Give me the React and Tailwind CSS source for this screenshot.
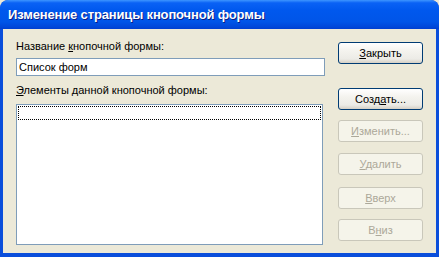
export default function App() {
  const btn =
    "w-[85px] h-[22px] rounded-[3px] border flex items-center justify-center text-[11px] leading-none";
  const enabled =
    "border-[#003C74] text-black bg-[linear-gradient(to_bottom,#FFFFFF_0%,#F4F3EE_40%,#ECEBE6_80%,#D6D0C5_100%)]";
  const disabled = "border-[#C9C7BA] text-[#ACA899] bg-[#F5F4EA]";

  return (
    <div className="w-[439px] h-[257px] font-['Liberation_Sans',Arial,sans-serif] bg-[#ECE9D8]">
      <div className="w-full h-full flex flex-col rounded-t-[8px] bg-[#0A4EDB] px-[3px] pb-[4px] overflow-hidden">
        {/* Title bar */}
        <div className="-mx-[3px] h-[29px] shrink-0 flex items-center pl-[8px] rounded-t-[8px] bg-[linear-gradient(to_bottom,#3D95FF_0%,#0A62F5_10%,#0058EE_35%,#0055E8_75%,#0048DA_92%,#003FD0_100%)]">
          <span className="text-white font-bold text-[13px] tracking-[-0.15px] [text-shadow:1px_1px_0_#0A1E86]">
            Изменение страницы кнопочной формы
          </span>
        </div>

        {/* Client area */}
        <div className="flex-1 bg-[#ECE9D8] flex pl-[13px] pr-[13px] text-[11px] text-black">
          <div className="flex flex-col w-[309px]">
            <div className="mt-[11px] h-[13px] leading-[13px]">
              Название <span className="underline">к</span>нопочной формы:
            </div>
            <div className="mt-[5px] h-[18px] w-[309px] border border-[#7F9DB9] bg-white flex items-center pl-[2px] leading-none">
              Список форм
            </div>
            <div className="mt-[8px] h-[13px] leading-[13px]">
              <span className="underline">Э</span>лементы данной кнопочной формы:
            </div>
            <div className="mt-[7px] h-[141px] w-[307px] border border-[#7F9DB9] bg-white p-[1px]">
              <div className="h-[14px] border border-dotted border-black" />
            </div>
          </div>

          <div className="ml-auto flex flex-col pt-[13px]">
            <div className={`${btn} ${enabled}`}>
              <span><span className="underline">З</span>акрыть</span>
            </div>
            <div className={`${btn} ${enabled} mt-[24px]`}>
              <span>Созд<span className="underline">а</span>ть...</span>
            </div>
            <div className={`${btn} ${disabled} mt-[10px]`}>
              <span><span className="underline">И</span>зменить...</span>
            </div>
            <div className={`${btn} ${disabled} mt-[11px]`}>
              <span><span className="underline">У</span>далить</span>
            </div>
            <div className={`${btn} ${disabled} mt-[12px]`}>
              <span><span className="underline">В</span>верх</span>
            </div>
            <div className={`${btn} ${disabled} mt-[10px]`}>
              <span>В<span className="underline">н</span>из</span>
            </div>
          </div>
        </div>
      </div>
    </div>
  );
}
